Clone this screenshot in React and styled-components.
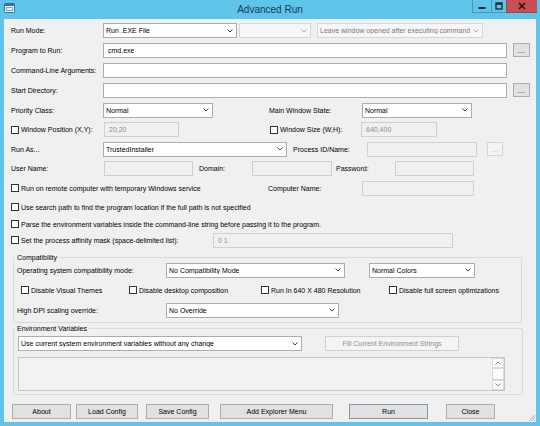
import React from "react";
import styled, { createGlobalStyle } from "styled-components";

const GlobalStyle = createGlobalStyle`
  html, body {
    margin: 0;
    padding: 0;
    background: #5ec4e8;
  }
  body {
    font-family: "Liberation Sans", Arial, sans-serif;
    font-size: 7px;
    color: #000;
  }
`;

const Frame = styled.div`
  width: 540px;
  height: 426px;
  box-sizing: border-box;
  background: #5ec4e8;
  display: flex;
  flex-direction: column;
  padding: 0 4px 4px;
`;

const TitleBar = styled.div`
  height: 19px;
  margin: 0 -4px;
  display: grid;
  grid-template-columns: 1fr auto 1fr;
  align-items: start;
`;

const TitleIcon = styled.div`
  padding: 3px 0 0 4px;
  display: flex;
`;

const TitleText = styled.div`
  font-size: 10px;
  line-height: 19px;
  color: #1c3a5a;
`;

const Controls = styled.div`
  justify-self: end;
  display: flex;
  margin-right: 3px;
`;

const CtrlButton = styled.div`
  width: ${(p) => p.$w}px;
  height: 13px;
  box-sizing: border-box;
  display: flex;
  align-items: center;
  justify-content: center;
  background: ${(p) => (p.$close ? "#c85050" : "transparent")};
  border-left: 1px solid rgba(30, 70, 100, 0.35);
  border-bottom: 1px solid rgba(30, 70, 100, 0.35);
`;

const Client = styled.div`
  position: relative;
  flex: 1;
  background: #f0f0f0;
  padding: 2px 0 0 7px;
  display: flex;
  flex-direction: column;
`;

const Row = styled.div`
  display: flex;
  align-items: center;
  height: ${(p) => p.$h}px;
  flex-shrink: 0;
`;

const Label = styled.div`
  width: ${(p) => (p.$w ? `${p.$w}px` : "auto")};
  margin-left: ${(p) => p.$ml || 0}px;
  flex-shrink: 0;
  white-space: nowrap;
  line-height: 9px;
`;

const Field = styled.div`
  width: ${(p) => p.$w}px;
  height: 15px;
  margin-left: ${(p) => p.$ml || 0}px;
  box-sizing: border-box;
  flex-shrink: 0;
  display: flex;
  align-items: center;
  padding: 0 4px;
  white-space: nowrap;
  overflow: hidden;
  border: 1px solid ${(p) => (p.$off ? "#cfcfcf" : "#abadb3")};
  background: ${(p) => (p.$off ? "#f0f0f0" : "#fff")};
  color: ${(p) => (p.$off ? "#8c8c8c" : "#000")};
`;

const SelectBox = styled.div`
  width: ${(p) => p.$w}px;
  height: 15px;
  margin-left: ${(p) => p.$ml || 0}px;
  box-sizing: border-box;
  flex-shrink: 0;
  display: flex;
  align-items: center;
  justify-content: space-between;
  padding: 0 3px 0 2px;
  white-space: nowrap;
  overflow: hidden;
  border: 1px solid ${(p) => (p.$off ? "#d6d6d6" : "#acacac")};
  background: ${(p) => (p.$off ? "#f6f6f6" : "#fff")};
  color: ${(p) => (p.$off ? "#7a7a7a" : "#000")};

  span {
    overflow: hidden;
  }
`;

const Dots = styled.div`
  width: ${(p) => p.$w || 17}px;
  height: 14px;
  margin-left: ${(p) => p.$ml || 0}px;
  box-sizing: border-box;
  flex-shrink: 0;
  display: flex;
  align-items: center;
  justify-content: center;
  border: 1px solid ${(p) => (p.$off ? "#d5d5d5" : "#adadad")};
  background: ${(p) => (p.$off ? "#f4f4f4" : "#e1e1e1")};
  color: ${(p) => (p.$off ? "#a8a8a8" : "#000")};
  letter-spacing: 0.5px;
`;

const CheckRow = styled.div`
  width: ${(p) => (p.$w ? `${p.$w}px` : "auto")};
  margin-left: ${(p) => p.$ml || 0}px;
  flex-shrink: 0;
  display: flex;
  align-items: center;
  gap: 2px;
  white-space: nowrap;
  line-height: 9px;
`;

const Box = styled.span`
  width: 8px;
  height: 8px;
  box-sizing: border-box;
  border: 1px solid #333;
  background: #fff;
  flex-shrink: 0;
`;

const Group = styled.fieldset`
  margin: ${(p) => p.$mt}px 0 0 2px;
  width: ${(p) => p.$w}px;
  box-sizing: border-box;
  border: 1px solid #d9d9d9;
  border-radius: 2px;
  padding: ${(p) => p.$pad};
  min-inline-size: 0;

  legend {
    padding: 0 2px;
    margin-left: ${(p) => p.$lm}px;
    line-height: 9px;
    font-size: 7px;
  }
`;

const EnvArea = styled.div`
  width: 487px;
  height: 34px;
  margin-top: 5px;
  box-sizing: border-box;
  border: 1px solid #c4c4c4;
  background: #f2f2f2;
  display: flex;
  justify-content: flex-end;
`;

const ScrollBar = styled.div`
  width: 12px;
  display: flex;
  flex-direction: column;
`;

const ScrollPart = styled.div`
  flex: ${(p) => p.$grow || "none"};
  height: ${(p) => (p.$grow ? "auto" : "10px")};
  box-sizing: border-box;
  border: 1px solid #dadada;
  background: #fcfcfc;
  display: flex;
  align-items: center;
  justify-content: center;
`;

const ButtonBar = styled.div`
  display: flex;
  align-items: center;
  margin-top: 9px;
  height: 15px;
`;

const Btn = styled.div`
  width: ${(p) => p.$w}px;
  height: 15px;
  margin-left: ${(p) => p.$ml || 0}px;
  box-sizing: border-box;
  flex-shrink: 0;
  display: flex;
  align-items: center;
  justify-content: center;
  white-space: nowrap;
  border: 1px solid ${(p) => (p.$off ? "#d0d0d0" : p.$def ? "#7e98b4" : "#adadad")};
  background: ${(p) => (p.$off ? "#f4f4f4" : "#e1e1e1")};
  color: ${(p) => (p.$off ? "#8e8e8e" : "#000")};
`;

const Grip = styled.svg`
  position: absolute;
  right: 0;
  bottom: 0;
`;

const Chevron = ({ up, c = "#444" }) => (
  <svg width="6" height="4" viewBox="0 0 6 4">
    <path
      d={up ? "M0.5 3.5 L3 1 L5.5 3.5" : "M0.5 0.5 L3 3 L5.5 0.5"}
      fill="none"
      stroke={c}
      strokeWidth="1"
    />
  </svg>
);

const Select = ({ w, ml, off, children }) => (
  <SelectBox $w={w} $ml={ml} $off={off}>
    <span>{children}</span>
    <Chevron c={off ? "#a8a8a8" : "#444"} />
  </SelectBox>
);

const Check = ({ w, ml, children }) => (
  <CheckRow $w={w} $ml={ml}>
    <Box />
    <span>{children}</span>
  </CheckRow>
);

export default function App() {
  return (
    <>
      <GlobalStyle />
      <Frame>
        <TitleBar>
          <TitleIcon>
            <svg width="11" height="10" viewBox="0 0 11 10">
              <rect x="0.5" y="0.5" width="10" height="9" rx="1" fill="#eaf5fb" stroke="#3c6fa4" />
              <rect x="0.5" y="0.5" width="10" height="2.5" fill="#3c6fa4" />
              <rect x="2.5" y="4.5" width="6" height="3" fill="none" stroke="#7aa6cf" />
            </svg>
          </TitleIcon>
          <TitleText>Advanced Run</TitleText>
          <Controls>
            <CtrlButton $w={19}>
              <svg width="8" height="8" viewBox="0 0 8 8">
                <rect x="0.5" y="5" width="7" height="2" fill="#1e2a36" />
              </svg>
            </CtrlButton>
            <CtrlButton $w={15}>
              <svg width="8" height="8" viewBox="0 0 8 8">
                <rect x="1" y="1" width="6" height="6" fill="none" stroke="#1e2a36" strokeWidth="1.4" />
                <rect x="1" y="1" width="6" height="1.8" fill="#1e2a36" />
              </svg>
            </CtrlButton>
            <CtrlButton $w={31} $close>
              <svg width="8" height="8" viewBox="0 0 8 8">
                <path d="M1 1 L7 7 M7 1 L1 7" stroke="#2a1212" strokeWidth="1.6" />
              </svg>
            </CtrlButton>
          </Controls>
        </TitleBar>

        <Client>
          <Row $h={19}>
            <Label $w={92}>Run Mode:</Label>
            <Select w={134}>Run .EXE File</Select>
            <Select w={72} ml={2} off />
            <Select w={166} ml={6} off>
              Leave window opened after executing command
            </Select>
          </Row>
          <Row $h={20}>
            <Label $w={92}>Program to Run:</Label>
            <Field $w={404}>cmd.exe</Field>
            <Dots $ml={6}>...</Dots>
          </Row>
          <Row $h={20}>
            <Label $w={92}>Command-Line Arguments:</Label>
            <Field $w={404} />
          </Row>
          <Row $h={20}>
            <Label $w={92}>Start Directory:</Label>
            <Field $w={404} />
            <Dots $ml={6}>...</Dots>
          </Row>
          <Row $h={20}>
            <Label $w={92}>Priority Class:</Label>
            <Select w={110}>Normal</Select>
            <Label $w={93} $ml={56}>Main Window State:</Label>
            <Select w={110}>Normal</Select>
          </Row>
          <Row $h={19}>
            <Check w={93}>Window Position (X,Y):</Check>
            <Field $w={75} $off>20,20</Field>
            <Check w={91} ml={91}>Window Size (W,H):</Check>
            <Field $w={76} $off>640,400</Field>
          </Row>
          <Row $h={20}>
            <Label $w={92}>Run As...</Label>
            <Select w={184}>TrustedInstaller</Select>
            <Label $w={74} $ml={6}>Process ID/Name:</Label>
            <Field $w={110} $off />
            <Dots $w={16} $ml={10} $off>...</Dots>
          </Row>
          <Row $h={19}>
            <Label $w={93}>User Name:</Label>
            <Field $w={89} $off />
            <Label $w={53} $ml={6}>Domain:</Label>
            <Field $w={80} $off />
            <Label $w={59} $ml={4}>Password:</Label>
            <Field $w={79} $off />
          </Row>
          <Row $h={20}>
            <Check w={257}>Run on remote computer with temporary Windows service</Check>
            <Label $w={94}>Computer Name:</Label>
            <Field $w={112} $off />
          </Row>
          <Row $h={18}>
            <Check>Use search path to find the program location if the full path is not specified</Check>
          </Row>
          <Row $h={16}>
            <Check>
              Parse the environment variables inside the command-line string before passing it to the program.
            </Check>
          </Row>
          <Row $h={16}>
            <Check w={202}>Set the process affinity mask (space-delimited list):</Check>
            <Field $w={240} $off>0 1</Field>
          </Row>

          <Group $mt={5} $w={509} $pad="0 4px 4px 3px" $lm={-2}>
            <legend>Compatibility</legend>
            <Row $h={16}>
              <Label $w={149}>Operating system compatibility mode:</Label>
              <Select w={179}>No Compatibility Mode</Select>
              <Select w={106} ml={24}>Normal Colors</Select>
            </Row>
            <Row $h={24}>
              <Check w={108} ml={4}>Disable Visual Themes</Check>
              <Check w={132}>Disable desktop composition</Check>
              <Check w={128}>Run In 640 X 480 Resolution</Check>
              <Check>Disable full screen optimizations</Check>
            </Row>
            <Row $h={16}>
              <Label $w={149}>High DPI scaling override:</Label>
              <Select w={173}>No Override</Select>
            </Row>
          </Group>

          <Group $mt={1} $w={510} $pad="2px 4px 3px 4px" $lm={-3}>
            <legend>Environment Variables</legend>
            <Row $h={17}>
              <Select w={284}>Use current system environment variables without any change</Select>
              <Btn $w={134} $ml={23} $off>
                Fill Current Environment Strings
              </Btn>
            </Row>
            <EnvArea>
              <ScrollBar>
                <ScrollPart>
                  <Chevron up c="#888" />
                </ScrollPart>
                <ScrollPart $grow={1} />
                <ScrollPart>
                  <Chevron c="#888" />
                </ScrollPart>
              </ScrollBar>
            </EnvArea>
          </Group>

          <ButtonBar>
            <Btn $w={59} $ml={1}>About</Btn>
            <Btn $w={62} $ml={5}>Load Config</Btn>
            <Btn $w={63} $ml={8}>Save Config</Btn>
            <Btn $w={113} $ml={11}>Add Explorer Menu</Btn>
            <Btn $w={79} $ml={16} $def>Run</Btn>
            <Btn $w={49} $ml={18}>Close</Btn>
          </ButtonBar>

          <Grip width="9" height="9" viewBox="0 0 9 9">
            <path d="M8 2 L2 8 M8 4.5 L4.5 8 M8 7 L7 8" stroke="#9a9a9a" strokeWidth="0.8" />
          </Grip>
        </Client>
      </Frame>
    </>
  );
}
